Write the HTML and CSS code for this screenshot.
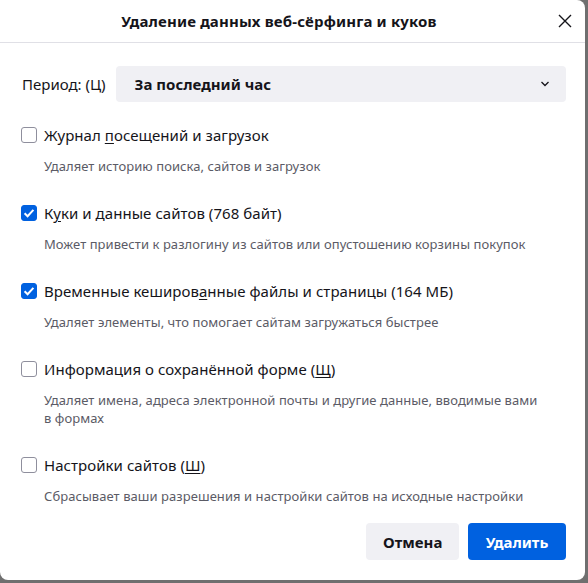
FILE: index.html
```html
<!DOCTYPE html>
<html lang="ru">
<head>
<meta charset="utf-8">
<title>Удаление данных веб-сёрфинга и куков</title>
<link rel="stylesheet" href="styles.css">
</head>
<body>
<div class="dialog">
  <div class="header">
    <div class="title">Удаление данных веб-сёрфинга и куков</div>
    <button class="close" aria-label="Закрыть">
      <svg width="14" height="14" viewBox="0 0 14 14"><path d="M1 1 L13 13 M13 1 L1 13" stroke="#15141a" stroke-width="1.4" fill="none"/></svg>
    </button>
  </div>
  <div class="content">
    <div class="period">
      <span class="period-label">Период: (Ц)</span>
      <div class="select">
        <span>За последний час</span>
        <svg width="10" height="6" viewBox="0 0 10 6"><path d="M1.5 1 L5 4.5 L8.5 1" stroke="#15141a" stroke-width="1.3" fill="none"/></svg>
      </div>
    </div>

    <div class="item">
      <div class="row"><span class="box"></span><span class="label">Журнал <u>п</u>осещений и загрузок</span></div>
      <div class="desc">Удаляет историю поиска, сайтов и загрузок</div>
    </div>
    <div class="item">
      <div class="row"><span class="box checked"><svg width="16" height="16" viewBox="0 0 16 16"><path d="M3.6 8.2 L6.6 11.2 L12.4 4.8" stroke="#fff" stroke-width="2" fill="none"/></svg></span><span class="label">К<u>у</u>ки и данные сайтов (768 байт)</span></div>
      <div class="desc">Может привести к разлогину из сайтов или опустошению корзины покупок</div>
    </div>
    <div class="item">
      <div class="row"><span class="box checked"><svg width="16" height="16" viewBox="0 0 16 16"><path d="M3.6 8.2 L6.6 11.2 L12.4 4.8" stroke="#fff" stroke-width="2" fill="none"/></svg></span><span class="label">Временные кеширов<u>а</u>нные файлы и страницы (164 МБ)</span></div>
      <div class="desc">Удаляет элементы, что помогает сайтам загружаться быстрее</div>
    </div>
    <div class="item">
      <div class="row"><span class="box"></span><span class="label">Информация о сохранённой форме (<u>Щ</u>)</span></div>
      <div class="desc">Удаляет имена, адреса электронной почты и другие данные, вводимые вами в формах</div>
    </div>
    <div class="item">
      <div class="row"><span class="box"></span><span class="label">Настройки сайтов (<u>Ш</u>)</span></div>
      <div class="desc">Сбрасывает ваши разрешения и настройки сайтов на исходные настройки</div>
    </div>

    <div class="buttons">
      <button class="btn secondary">Отмена</button>
      <button class="btn primary">Удалить</button>
    </div>
  </div>
</div>
</body>
</html>
```

FILE: styles.css
```css
html, body {
  margin: 0;
  padding: 0;
}
body {
  background: #6f6f6f;
  width: 588px;
  height: 583px;
  overflow: hidden;
  font-family: "Noto Sans", "Open Sans", sans-serif;
  color: #15141a;
}
.dialog {
  width: 585px;
  height: 580px;
  background: #ffffff;
  border-radius: 0 8px 8px 8px;
  box-sizing: border-box;
}
.header {
  height: 43px;
  border-bottom: 1px solid #e0e0e6;
  box-sizing: border-box;
  display: flex;
  align-items: center;
}
.title {
  width: 558px;
  text-align: center;
  font-weight: 700;
  font-size: 15px;
  line-height: 20px;
  padding-bottom: 1px;
  letter-spacing: 0.15px;
}
.close {
  border: 0;
  background: none;
  padding: 0;
  width: 14px;
  height: 14px;
  display: flex;
}
.content {
  padding: 23px 19px 0 21px;
}
.period {
  display: flex;
  align-items: center;
  gap: 10px;
  margin-bottom: 22px;
}
.period-label {
  font-size: 15px;
  padding-left: 1px;
}
.select {
  flex: 1;
  height: 36px;
  background: #f0f0f4;
  border-radius: 4px;
  display: flex;
  align-items: center;
  justify-content: space-between;
  padding: 0 16px 0 19px;
  font-weight: 700;
  font-size: 15px;
}
.item {
  margin-bottom: 27px;
}
.row {
  display: flex;
  align-items: center;
  gap: 7px;
  height: 22px;
}
.box {
  width: 16px;
  height: 16px;
  box-sizing: border-box;
  border: 1px solid #8f8f9d;
  border-radius: 3px;
  flex: none;
  display: flex;
}
.box.checked {
  background: #0061e0;
  border-color: #0061e0;
}
.box.checked svg {
  margin: -1px;
}
.label {
  font-size: 15px;
  line-height: 22px;
  letter-spacing: 0.05px;
}
.label u {
  text-underline-offset: 2px;
}
.desc {
  margin: 11px 0 0 23px;
  font-size: 13px;
  line-height: 18px;
  color: #5b5b66;
  padding-right: 23px;
  letter-spacing: 0.06px;
}
.buttons {
  display: flex;
  justify-content: flex-end;
  gap: 9px;
  margin-top: -9px;
}
.btn {
  height: 37px;
  border: 0;
  border-radius: 4px;
  font-family: "Noto Sans", "Open Sans", sans-serif;
  font-weight: 700;
  font-size: 15px;
  padding: 0 17px;
}
.secondary {
  background: #f0f0f4;
  color: #15141a;
  width: 93px;
}
.primary {
  background: #0061e0;
  color: #ffffff;
  width: 98px;
}
```
